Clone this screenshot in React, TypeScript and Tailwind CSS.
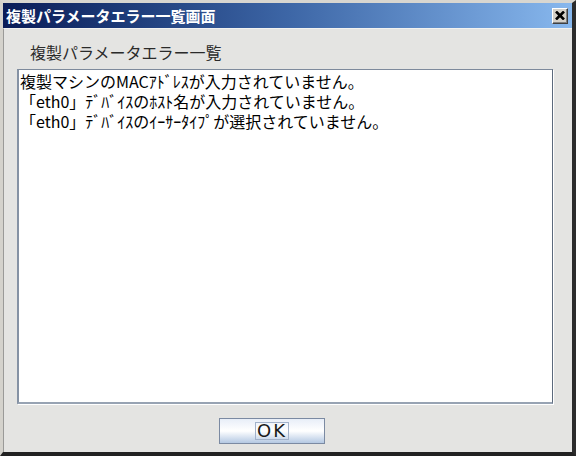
const jp = { fontFamily: '"Noto Sans CJK JP", "Noto Sans", sans-serif' };

function CloseButton() {
  return (
    <div className="w-[16px] h-[16px] bg-[#d4d0c8] border border-t-white border-l-white border-r-[#404040] border-b-[#404040] flex items-center justify-center shadow-[inset_-1px_-1px_0_#808080]">
      <svg width="10" height="9" viewBox="0 0 10 9">
        <path d="M1 0.5 L9 8.5 M9 0.5 L1 8.5" stroke="#000" strokeWidth="2.6" />
      </svg>
    </div>
  );
}

export default function App() {
  const lines = [
    "複製マシンのMACｱﾄﾞﾚｽが入力されていません。",
    "「eth0」ﾃﾞﾊﾞｲｽのﾎｽﾄ名が入力されていません。",
    "「eth0」ﾃﾞﾊﾞｲｽのｲｰｻｰﾀｲﾌﾟが選択されていません。",
  ];

  return (
    <div
      className="w-[576px] h-[456px] flex flex-col border-t-[3px] border-l-[3px] border-r-4 border-b-4 border-t-[#d8d6d0] border-l-[#d4d2cc] border-r-[#2c2c2c] border-b-[#222]"
      style={jp}
    >
      {/* タイトルバー */}
      <div className="h-[25px] flex items-center justify-between pl-[3px] pr-[4px] bg-gradient-to-r from-[#0a1c58] via-[#3d66a6] to-[#88b8ee]">
        <span className="text-white font-bold text-[15px] leading-none">
          複製パラメータエラー一覧画面
        </span>
        <CloseButton />
      </div>

      {/* 本体 */}
      <div className="flex-1 flex flex-col bg-[#e4e4e2] border-t border-t-[#f2f2f0] border-l border-l-[#9a9a98] pl-[13px]">
        <div className="pt-[13px] pl-[13px] text-[16px] leading-[20px] text-[#2a2a2a]">
          複製パラメータエラー一覧
        </div>

        <div className="mt-[7px] w-[536px] h-[335px] bg-white border-t border-r border-l-2 border-b-2 border-t-[#7d8a9c] border-r-[#5c6a7c] border-l-[#8592a4] border-b-[#97a3b3] shadow-[1px_1px_0_#ffffff] pl-[1px] pt-[1px]">
          {lines.map((l) => (
            <div key={l} className="h-[20px] text-[16px] leading-[20px] text-black whitespace-nowrap">
              {l}
            </div>
          ))}
        </div>

        <div className="mt-[14px] pl-[202px]">
          <button className="w-[106px] h-[26px] flex items-center justify-center border border-[#7b8aa2] bg-gradient-to-b from-[#e8eef8] via-[#ffffff] to-[#b4c8e2]">
            <span
              className="border border-[#a2b2ca] px-[1px] h-[18px] flex items-center text-[18px] leading-none text-[#1a1a1a]"
              style={{ fontFamily: '"DejaVu Sans", sans-serif', letterSpacing: "2px" }}
            >
              OK
            </span>
          </button>
        </div>
      </div>
    </div>
  );
}
